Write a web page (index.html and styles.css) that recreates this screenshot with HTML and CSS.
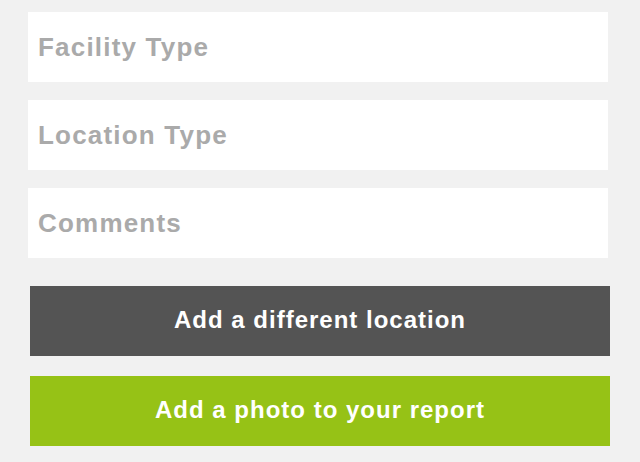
FILE: index.html
```html
<!DOCTYPE html>
<html lang="en">
<head>
<meta charset="utf-8">
<title>Report</title>
<link rel="stylesheet" href="styles.css">
</head>
<body>
<form class="form">
  <div class="fields">
    <input class="field" type="text" placeholder="Facility Type">
    <input class="field" type="text" placeholder="Location Type">
    <input class="field" type="text" placeholder="Comments">
  </div>
  <div class="actions">
    <button type="button" class="btn btn-dark">Add a different location</button>
    <button type="button" class="btn btn-green">Add a photo to your report</button>
  </div>
</form>
</body>
</html>
```

FILE: styles.css
```css
html, body {
  margin: 0;
  padding: 0;
  background: #f1f1f1;
}
.form {
  display: flex;
  flex-direction: column;
  padding-top: 12px;
}
.fields {
  display: flex;
  flex-direction: column;
  gap: 18px;
  padding-left: 28px;
}
.field {
  box-sizing: border-box;
  width: 580px;
  height: 70px;
  margin: 0;
  border: 0;
  outline: none;
  background: #ffffff;
  padding: 1px 10px 0 10px;
  font-family: "Liberation Sans", Arial, sans-serif;
  font-weight: bold;
  font-size: 26px;
  letter-spacing: 1.2px;
  color: #555;
}
.field::placeholder {
  color: #aaaaaa;
  opacity: 1;
}
.actions {
  display: flex;
  flex-direction: column;
  gap: 20px;
  padding-left: 30px;
  margin-top: 28px;
}
.btn {
  box-sizing: border-box;
  width: 580px;
  height: 70px;
  margin: 0;
  border: 0;
  padding: 0 0 2px 0;
  color: #ffffff;
  font-family: "Liberation Sans", Arial, sans-serif;
  font-weight: bold;
  font-size: 24px;
  letter-spacing: 1px;
  text-align: center;
  cursor: pointer;
}
.btn-dark {
  background: #545454;
}
.btn-green {
  background: #96c216;
}
```
